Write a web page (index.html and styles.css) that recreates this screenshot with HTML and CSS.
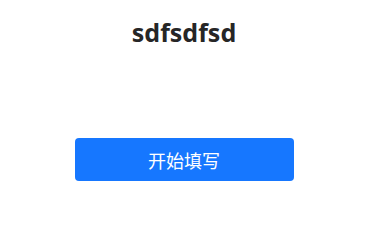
FILE: index.html
```html
<!DOCTYPE html>
<html>
<head>
<meta charset="utf-8">
<link rel="stylesheet" href="styles.css">
</head>
<body>
<div class="page">
  <h1 class="title">sdfsdfsd</h1>
  <div class="spacer"></div>
  <button class="start">开始填写</button>
</div>
</body>
</html>
```
FILE: styles.css
```css
html, body {
  margin: 0;
  padding: 0;
  background: #ffffff;
}
.page {
  width: 368px;
  height: 200px;
  display: flex;
  flex-direction: column;
  align-items: center;
  font-family: "Noto Sans", "Noto Sans CJK SC", sans-serif;
}
.title {
  margin: 16px 0 0 0;
  font-size: 25px;
  line-height: 32px;
  font-weight: 700;
  color: #262626;
}
.spacer {
  height: 90px;
}
.start {
  width: 219px;
  height: 43px;
  border: none;
  border-radius: 4px;
  background: #1677ff;
  color: #ffffff;
  font-family: "Noto Sans CJK SC", sans-serif;
  font-size: 18px;
  padding: 0;
}
```
